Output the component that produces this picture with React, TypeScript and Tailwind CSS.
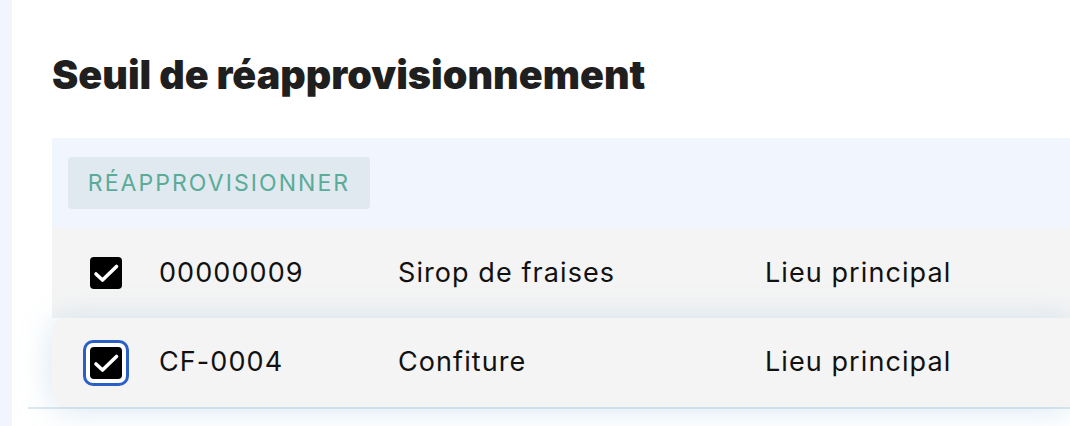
import React from "react";

const Check = () => (
  <svg viewBox="0 0 32 32" className="w-[32px] h-[32px]" fill="none" stroke="white" strokeWidth={3.6} strokeLinecap="round" strokeLinejoin="round">
    <path d="M6 17l6.5 6L26.5 9.5" />
  </svg>
);

const Box = () => (
  <div className="w-[32px] h-[32px] bg-black rounded-[4px] flex items-center justify-center">
    <Check />
  </div>
);

const rows = [
  { code: "00000009", name: "Sirop de fraises", loc: "Lieu principal" },
  { code: "CF-0004", name: "Confiture", loc: "Lieu principal" },
];

export default function App() {
  const font = { fontFamily: "Inter, 'Noto Sans', sans-serif" };
  return (
    <div className="flex w-[1070px] h-[426px] overflow-hidden bg-white" style={font}>
      <div className="w-3 shrink-0 bg-[#f2f5fd]" />
      <div className="flex-1 flex flex-col pt-[51px]">
        <h1 className="pl-10 text-[39.5px] leading-[48px] font-black text-[#1f1f1f]">
          Seuil de réapprovisionnement
        </h1>
        <div className="mt-[39px] ml-4 border-b-2 border-[#dde9f1]">
          <div className="ml-6">
            <div className="bg-[#f1f5fd] pl-4 py-[19px]">
              <button className="w-[302px] h-[52px] rounded-[4px] bg-[#dfe9ef] text-[#5aab98] text-[23px] tracking-[0.09em] font-normal">
                RÉAPPROVISIONNER
              </button>
            </div>
            <div className="grid grid-cols-[107px_239px_367px_1fr] items-center h-[90px] bg-[#f4f4f4] text-[27px] tracking-[0.04em] text-[#111]">
              <div className="flex justify-center"><Box /></div>
              <div>{rows[0].code}</div>
              <div>{rows[0].name}</div>
              <div>{rows[0].loc}</div>
            </div>
            <div className="relative grid grid-cols-[107px_239px_367px_1fr] items-center h-[89px] bg-[#f4f4f4] rounded-l-[14px] text-[27px] tracking-[0.04em] text-[#111] shadow-[0_2px_32px_rgba(110,170,210,0.28)]">
              <div className="flex justify-center">
                <div className="p-[4px] rounded-[7px] ring-[3px] ring-[#2a60c6] bg-white">
                  <Box />
                </div>
              </div>
              <div>{rows[1].code}</div>
              <div>{rows[1].name}</div>
              <div>{rows[1].loc}</div>
            </div>
          </div>
        </div>
      </div>
    </div>
  );
}
